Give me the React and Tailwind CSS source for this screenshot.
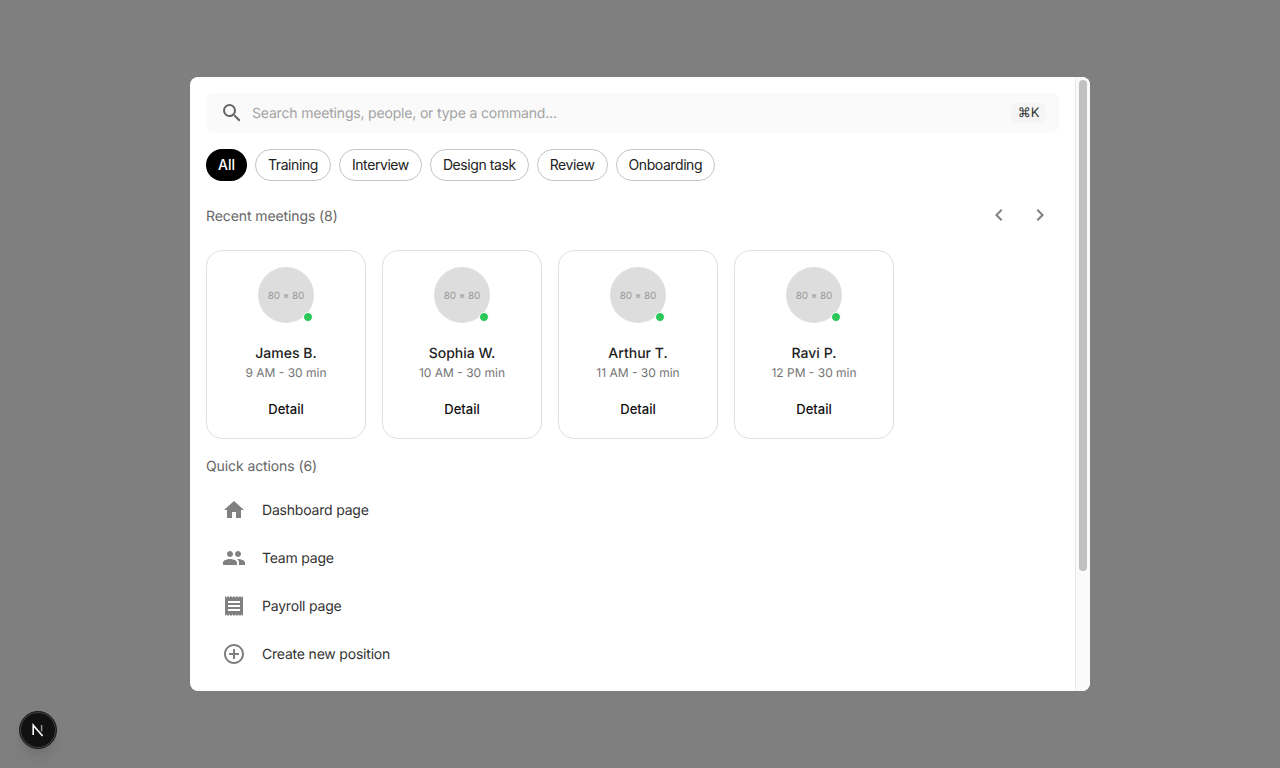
import { MdSearch, MdHome, MdPeople, MdReceipt, MdAddCircleOutline, MdChevronLeft, MdChevronRight } from 'react-icons/md';

const filtros = ['Training', 'Interview', 'Design task', 'Review', 'Onboarding'];

const reuniones = [
    { nombre: 'James B.', hora: '9 AM - 30 min' },
    { nombre: 'Sophia W.', hora: '10 AM - 30 min' },
    { nombre: 'Arthur T.', hora: '11 AM - 30 min' },
    { nombre: 'Ravi P.', hora: '12 PM - 30 min' },
];

const acciones = [
    { texto: 'Dashboard page', Icono: MdHome },
    { texto: 'Team page', Icono: MdPeople },
    { texto: 'Payroll page', Icono: MdReceipt },
    { texto: 'Create new position', Icono: MdAddCircleOutline },
];

const App = () => {
    return (
        <div className="h-screen bg-[#7f7f7f] flex items-center justify-center font-['Inter',sans-serif] [text-rendering:geometricPrecision] overflow-hidden relative">
            {/* Modal */}
            <div className="w-[900px] h-[614px] bg-white rounded-lg overflow-hidden flex">
                <div className="flex-1 min-w-0 p-4 overflow-hidden">
                    {/* Buscador */}
                    <div className="h-10 bg-[#fafafa] rounded-lg flex items-center pl-[14px] pr-[13px]">
                        <MdSearch className="text-[#666666] shrink-0" size={24} />
                        <span className="ml-[8px] flex-1 h-5 text-sm leading-[22px] tracking-[-0.18px] text-[#a3a3a3]">Search meetings, people, or type a command...</span>
                        <span className="h-[20px] w-[35px] bg-[#f5f5f5] rounded-md flex items-center justify-center text-[13px] leading-[22px] text-[#333333]">⌘K</span>
                    </div>

                    {/* Filtros */}
                    <div className="flex gap-2 mt-4">
                        <button className="h-8 px-3 rounded-full bg-black text-white text-sm font-medium">All</button>
                        {filtros.map(f => (
                            <button key={f} className="h-8 px-3 rounded-full border border-[#c4c4c4] text-[#222222] text-sm tracking-[-0.42px]">{f}</button>
                        ))}
                    </div>

                    {/* Recientes */}
                    <div className="flex items-center justify-between mt-[14px] h-[42px]">
                        <h2 className="h-5 text-sm font-normal leading-[22px] tracking-[-0.1px] text-[#666666]">Recent meetings (8)</h2>
                        <div className="flex items-center gap-[17px] pr-[7px] pb-[2px]">
                            <MdChevronLeft className="text-[#808080]" size={24} />
                            <MdChevronRight className="text-[#808080]" size={24} />
                        </div>
                    </div>

                    <div className="flex gap-4 mt-[13px]">
                        {reuniones.map(r => (
                            <div key={r.nombre} className="w-40 h-[189px] border border-[#e0e0e0] rounded-2xl flex flex-col items-center pt-4">
                                <div className="relative w-14 h-14 rounded-full bg-[#dddddd] flex items-center justify-center">
                                    <span className="h-[15px] text-[10px] leading-[17px] tracking-[-0.1px] text-[#999999]">80 × 80</span>
                                    <span className="absolute right-[1px] bottom-[1px] w-[8px] h-[8px] rounded-full bg-[#2cc95a] box-content border border-white"></span>
                                </div>
                                <p className="mt-[20px] h-5 text-sm font-medium leading-[22px] text-[#222222]">{r.nombre}</p>
                                <p className="text-xs leading-5 text-[#757575]">{r.hora}</p>
                                <button className="mt-[16px] text-[13px] font-medium leading-5 text-[#111111]">Detail</button>
                            </div>
                        ))}
                    </div>

                    {/* Acciones */}
                    <h2 className="mt-[17px] h-5 text-sm font-normal leading-[22px] tracking-[-0.1px] text-[#666666]">Quick actions (6)</h2>
                    <ul className="mt-[10px]">
                        {acciones.map(({ texto, Icono }) => (
                            <li key={texto} className="h-12 flex items-center pl-4">
                                <Icono className="text-[#808080] shrink-0" size={24} />
                                <span className="ml-4 h-5 text-sm leading-[22px] tracking-[-0.2px] text-[#333333]">{texto}</span>
                            </li>
                        ))}
                    </ul>
                </div>

                {/* Barra de scroll */}
                <div className="w-[15px] shrink-0 bg-[#fafafa] border-l border-[#e8e8e8] pl-[3px] pt-[3px]">
                    <div className="w-[8px] h-[491px] rounded-full bg-[#c1c1c1]"></div>
                </div>
            </div>

            {/* Badge de Next */}
            <div className="absolute left-[19px] bottom-[19px] w-[38px] h-[38px] rounded-full bg-[#111111] border border-[#1f1f1f] ring-1 ring-inset ring-[#444444] flex items-center justify-center shadow-lg">
                <svg width="16" height="16" viewBox="0 0 16 16" fill="none">
                    <path d="M3.2 13V3.2L12.6 14" stroke="#ffffff" strokeWidth="1.6" />
                    <path d="M11.6 3v6.5" stroke="#999999" strokeWidth="1.4" />
                </svg>
            </div>
        </div>
    );
};

export default App;
